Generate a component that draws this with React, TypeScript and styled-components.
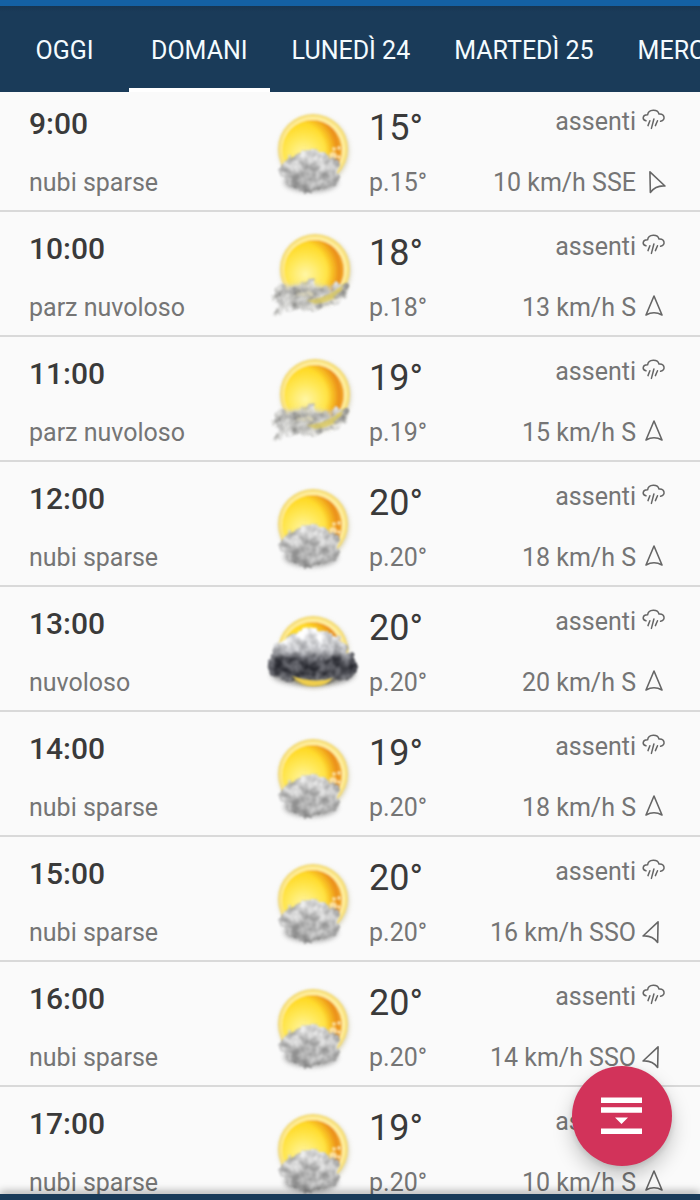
import React from 'react';
import styled, { createGlobalStyle } from 'styled-components';

const GlobalStyle = createGlobalStyle`
  *, *::before, *::after { box-sizing: border-box; }
  body {
    margin: 0;
    background: #fafafa;
    font-family: Roboto, "Liberation Sans", sans-serif;
  }
  button { font: inherit; border: 0; cursor: pointer; }
`;

const Screen = styled.div`
  display: flex;
  flex-direction: column;
  height: 100vh;
  overflow: hidden;
  background: #fafafa;
`;

const TabBar = styled.nav`
  position: relative;
  z-index: 1;
  flex: none;
  display: flex;
  height: 92px;
  overflow: hidden;
  border-top: 6px solid #1461a4;
  background: linear-gradient(#173652, #1a3b59 6px);
`;

const Tab = styled.button<{ $active: boolean }>`
  flex: none;
  min-width: 129px;
  padding: 8px 22px 0;
  border-bottom: 4px solid ${(p) => (p.$active ? '#ffffff' : 'transparent')};
  background: none;
  color: #f4fbff;
  font-size: 25px;
  line-height: 30px;
  white-space: nowrap;
`;

const HourList = styled.ul`
  flex: 1;
  min-height: 0;
  margin: -5px 0 0;
  padding: 0;
  overflow: hidden;
  list-style: none;
`;

const HourRow = styled.li`
  display: grid;
  grid-template-columns: 1fr 120px 77px 1fr;
  height: 125px;
  padding: 20px 34px 12px 29px;
  border-bottom: 2px solid #d9d9d9;
`;

const Column = styled.div<{ $end?: boolean }>`
  display: flex;
  flex-direction: column;
  justify-content: space-between;
  align-items: ${(p) => (p.$end ? 'flex-end' : 'flex-start')};
  white-space: nowrap;
`;

const Time = styled.time`
  color: #3a3a3a;
  font-size: 30px;
  font-weight: 500;
  line-height: 34px;
`;

const Temperature = styled.span`
  color: #3a3a3a;
  font-size: 36px;
  line-height: 42px;
`;

const Detail = styled.span`
  display: flex;
  align-items: center;
  gap: 6px;
  color: #757575;
  font-size: 25px;
  line-height: 30px;
`;

const SmallIcon = styled.svg`
  flex: none;
  width: 24px;
  height: 24px;
  overflow: visible;
  fill: none;
  stroke: #666666;
  stroke-linejoin: round;
`;

const SkyIcon = styled.svg`
  display: block;
  width: 120px;
  height: 91px;
  overflow: visible;
`;

const Definitions = styled.svg`
  position: absolute;
  width: 0;
  height: 0;
`;

const BottomBar = styled.footer`
  position: relative;
  flex: none;
  height: 6px;
  background: #1a3b59;
  box-shadow: 0 -2px 9px rgba(0, 0, 0, 0.4);
`;

const ActionButton = styled.button`
  position: fixed;
  right: 28px;
  bottom: 34px;
  z-index: 2;
  width: 100px;
  height: 100px;
  padding: 0;
  border-radius: 50%;
  background: #d2335a;
  box-shadow: 0 10px 20px rgba(0, 0, 0, 0.22), 0 2px 6px rgba(0, 0, 0, 0.12);

  svg { display: block; }
`;

type Sky = 'nubi sparse' | 'parz nuvoloso' | 'nuvoloso';
type Wind = 'SSE' | 'S' | 'SSO';

interface Hour {
  time: string;
  sky: Sky;
  temp: number;
  feels: number;
  speed: number;
  wind: Wind;
}

const tabs = ['OGGI', 'DOMANI', 'LUNEDÌ 24', 'MARTEDÌ 25', 'MERCOLEDÌ 26'];

const hours: Hour[] = [
  { time: '9:00', sky: 'nubi sparse', temp: 15, feels: 15, speed: 10, wind: 'SSE' },
  { time: '10:00', sky: 'parz nuvoloso', temp: 18, feels: 18, speed: 13, wind: 'S' },
  { time: '11:00', sky: 'parz nuvoloso', temp: 19, feels: 19, speed: 15, wind: 'S' },
  { time: '12:00', sky: 'nubi sparse', temp: 20, feels: 20, speed: 18, wind: 'S' },
  { time: '13:00', sky: 'nuvoloso', temp: 20, feels: 20, speed: 20, wind: 'S' },
  { time: '14:00', sky: 'nubi sparse', temp: 19, feels: 20, speed: 18, wind: 'S' },
  { time: '15:00', sky: 'nubi sparse', temp: 20, feels: 20, speed: 16, wind: 'SSO' },
  { time: '16:00', sky: 'nubi sparse', temp: 20, feels: 20, speed: 14, wind: 'SSO' },
  { time: '17:00', sky: 'nubi sparse', temp: 19, feels: 20, speed: 10, wind: 'S' },
];

const arrowAngle: Record<Wind, number> = { SSE: -24, S: 0, SSO: 24 };

const SkyDefinitions = () => (
  <Definitions aria-hidden="true">
    <defs>
      <radialGradient id="sunFace" cx="0.36" cy="0.58" r="0.66">
        <stop offset="0" stopColor="#fff6a6" />
        <stop offset="0.4" stopColor="#ffe95c" />
        <stop offset="0.72" stopColor="#ffdc2c" />
        <stop offset="1" stopColor="#fccf22" />
      </radialGradient>
      <radialGradient id="sunShade" cx="0.22" cy="0.52" r="0.8">
        <stop offset="0.62" stopColor="#f09a18" stopOpacity="0" />
        <stop offset="0.88" stopColor="#e8861a" stopOpacity="0.9" />
        <stop offset="1" stopColor="#f2a83a" stopOpacity="0.7" />
      </radialGradient>
      <linearGradient id="cloudGrey" x1="0" y1="0" x2="0" y2="1">
        <stop offset="0" stopColor="#d6d6d6" />
        <stop offset="0.4" stopColor="#c0c0c0" />
        <stop offset="0.8" stopColor="#ababab" />
        <stop offset="1" stopColor="#868686" />
      </linearGradient>
      <linearGradient id="cloudDark" x1="0" y1="0" x2="0" y2="1">
        <stop offset="0" stopColor="#f6f6f8" />
        <stop offset="0.3" stopColor="#d3d4d7" />
        <stop offset="0.46" stopColor="#9a9ba0" />
        <stop offset="0.6" stopColor="#4a4b52" />
        <stop offset="0.84" stopColor="#42434a" />
        <stop offset="1" stopColor="#808185" />
      </linearGradient>
      <filter id="soft" x="-30%" y="-30%" width="160%" height="160%">
        <feGaussianBlur stdDeviation="2.4" />
      </filter>
      <filter id="smooth" x="-10%" y="-10%" width="120%" height="120%">
        <feGaussianBlur stdDeviation="1" />
      </filter>
      <filter id="fluff" x="-15%" y="-20%" width="130%" height="140%" colorInterpolationFilters="sRGB">
        <feTurbulence type="fractalNoise" baseFrequency="0.12" numOctaves="3" seed="4" result="noise" />
        <feColorMatrix in="noise" type="matrix" values="2.2 0 0 0 -0.6  2.2 0 0 0 -0.6  2.2 0 0 0 -0.6  0 0 0 0 1" result="grain" />
        <feDisplacementMap in="SourceGraphic" in2="noise" scale="9" xChannelSelector="R" yChannelSelector="G" result="rough" />
        <feComposite in="rough" in2="grain" operator="arithmetic" k1="0" k2="1" k3="0.26" k4="-0.12" result="textured" />
        <feComposite in="textured" in2="rough" operator="in" />
        <feGaussianBlur stdDeviation="0.9" />
      </filter>
      <filter id="wisp" x="-15%" y="-25%" width="130%" height="150%" colorInterpolationFilters="sRGB">
        <feTurbulence type="fractalNoise" baseFrequency="0.12" numOctaves="3" seed="9" result="noise" />
        <feColorMatrix in="noise" type="matrix" values="0.6 0 0 0 0.42  0.6 0 0 0 0.42  0.6 0 0 0 0.41  0 3 0 0 -0.7" result="grain" />
        <feDisplacementMap in="SourceGraphic" in2="noise" scale="12" xChannelSelector="R" yChannelSelector="G" result="rough" />
        <feComposite in="grain" in2="rough" operator="in" />
        <feGaussianBlur stdDeviation="1" />
      </filter>
    </defs>
  </Definitions>
);

const Sun = ({ cx, cy, r }: { cx: number; cy: number; r: number }) => (
  <g>
    <circle cx={cx + 1} cy={cy + 2} r={r + 4} fill="#b5ad82" opacity="0.5" filter="url(#soft)" />
    <g filter="url(#smooth)">
      <circle cx={cx} cy={cy} r={r + 4} fill="#f8e07c" />
      <circle cx={cx} cy={cy} r={r + 1} fill="#ffefa0" />
      <circle cx={cx - 1} cy={cy + 1} r={r - 1} fill="url(#sunFace)" />
      <circle cx={cx - 1} cy={cy + 1} r={r - 1} fill="url(#sunShade)" />
    </g>
  </g>
);

const ScatteredClouds = () => (
  <>
    <Sun cx={63} cy={52} r={31} />
    <g fill="#fff3cf" opacity="0.7" filter="url(#smooth)">
      <circle cx="84" cy="52" r="2" />
      <circle cx="89" cy="51" r="2" />
      <circle cx="83" cy="59" r="4" />
      <circle cx="89" cy="60" r="2" />
    </g>
    <ellipse cx="61" cy="85" rx="27" ry="10" fill="#777777" opacity="0.6" filter="url(#soft)" />
    <path
      d="M38 65C40 57 46 57 50 56C54 49 66 49 71 55C78 54 80 59 81 63C90 64 92 71 89 75C92 82 85 88 78 88C74 94 64 92 60 95C55 97 51 92 47 90C39 91 37 86 36 81C26 79 25 67 38 65Z"
      fill="url(#cloudGrey)"
      filter="url(#fluff)"
    />
  </>
);

const PartlyCloudy = () => (
  <>
    <Sun cx={65} cy={47} r={31} />
    <path d="M32 64L60 61L84 66L80 82L60 86L38 79Z" fill="#d6d5d0" opacity="0.85" filter="url(#soft)" />
    <path
      d="M27 65C36 60 46 64 54 58C62 57 66 62 72 65C82 66 90 60 97 65C97 75 90 83 76 83C70 90 56 90 48 86C40 90 31 87 27 93C22 94 23 86 28 83C22 78 23 69 27 65Z"
      filter="url(#wisp)"
    />
    <path d="M56 78Q74 78 94 62Q86 80 66 82Z" fill="#dcc63c" opacity="0.6" filter="url(#smooth)" />
  </>
);

const Cloudy = () => (
  <>
    <Sun cx={63} cy={54} r={31} />
    <ellipse cx="63" cy="77" rx="42" ry="12" fill="#444444" opacity="0.5" filter="url(#soft)" />
    <path
      d="M33 43C40 38 47 35 52 33C60 29 73 30 77 37C89 36 98 47 98 55C106 61 108 68 107 73C105 84 93 85 85 83C72 87 57 86 49 82C38 87 24 82 19 73C17 67 21 60 23 57C21 49 27 45 33 43Z"
      fill="url(#cloudDark)"
      filter="url(#fluff)"
    />
    <path d="M42 79Q64 87 83 81Q77 89 64 89Q51 89 42 79Z" fill="#efce4c" filter="url(#smooth)" />
  </>
);

const skyDrawing: Record<Sky, React.ReactElement> = {
  'nubi sparse': <ScatteredClouds />,
  'parz nuvoloso': <PartlyCloudy />,
  nuvoloso: <Cloudy />,
};

const RainIcon = () => (
  <SmallIcon viewBox="0 1 24 24" strokeWidth="1.5" strokeLinecap="round" aria-hidden="true">
    <path d="M4 11.8C-.2 10.6.3 5.7 5.6 5.8C6.4-.2 15.8-.2 17 5C22.7 4.4 24 11 18.6 12.3" />
    <path d="M7.9 11.8L6 16.6M11.9 10L9.4 19.4M15.5 11.8L13.4 16.6" />
  </SmallIcon>
);

const WindArrow = ({ wind }: { wind: Wind }) => (
  <SmallIcon viewBox="0 2 24 24" strokeWidth="1.6" aria-hidden="true">
    <path d="M12 2L20 21Q12 16.6 4 21Z" transform={`rotate(${arrowAngle[wind]} 12 12)`} />
  </SmallIcon>
);

const App = () => (
  <>
    <GlobalStyle />
    <SkyDefinitions />
    <Screen>
      <TabBar role="tablist" aria-label="Giorni">
        {tabs.map((label) => (
          <Tab key={label} type="button" role="tab" aria-selected={label === 'DOMANI'} $active={label === 'DOMANI'}>
            {label}
          </Tab>
        ))}
      </TabBar>
      <HourList>
        {hours.map((h) => (
          <HourRow key={h.time}>
            <Column>
              <Time>{h.time}</Time>
              <Detail>{h.sky}</Detail>
            </Column>
            <SkyIcon viewBox="-1 10 120 91" aria-hidden="true">
              {skyDrawing[h.sky]}
            </SkyIcon>
            <Column>
              <Temperature>{h.temp}°</Temperature>
              <Detail>p.{h.feels}°</Detail>
            </Column>
            <Column $end>
              <Detail>
                assenti
                <RainIcon />
              </Detail>
              <Detail>
                {`${h.speed} km/h ${h.wind}`}
                <WindArrow wind={h.wind} />
              </Detail>
            </Column>
          </HourRow>
        ))}
      </HourList>
      <BottomBar />
      <ActionButton type="button" aria-label="Espandi">
        <svg width="100" height="100" viewBox="0 0 100 100" fill="#ffffff" aria-hidden="true">
          <path d="M29 31.5H70V37H29ZM29 41.3H70V46.7H29ZM29 62.5H70V68H29ZM43 51.6H56L49.5 58Z" />
        </svg>
      </ActionButton>
    </Screen>
  </>
);

export default App;
